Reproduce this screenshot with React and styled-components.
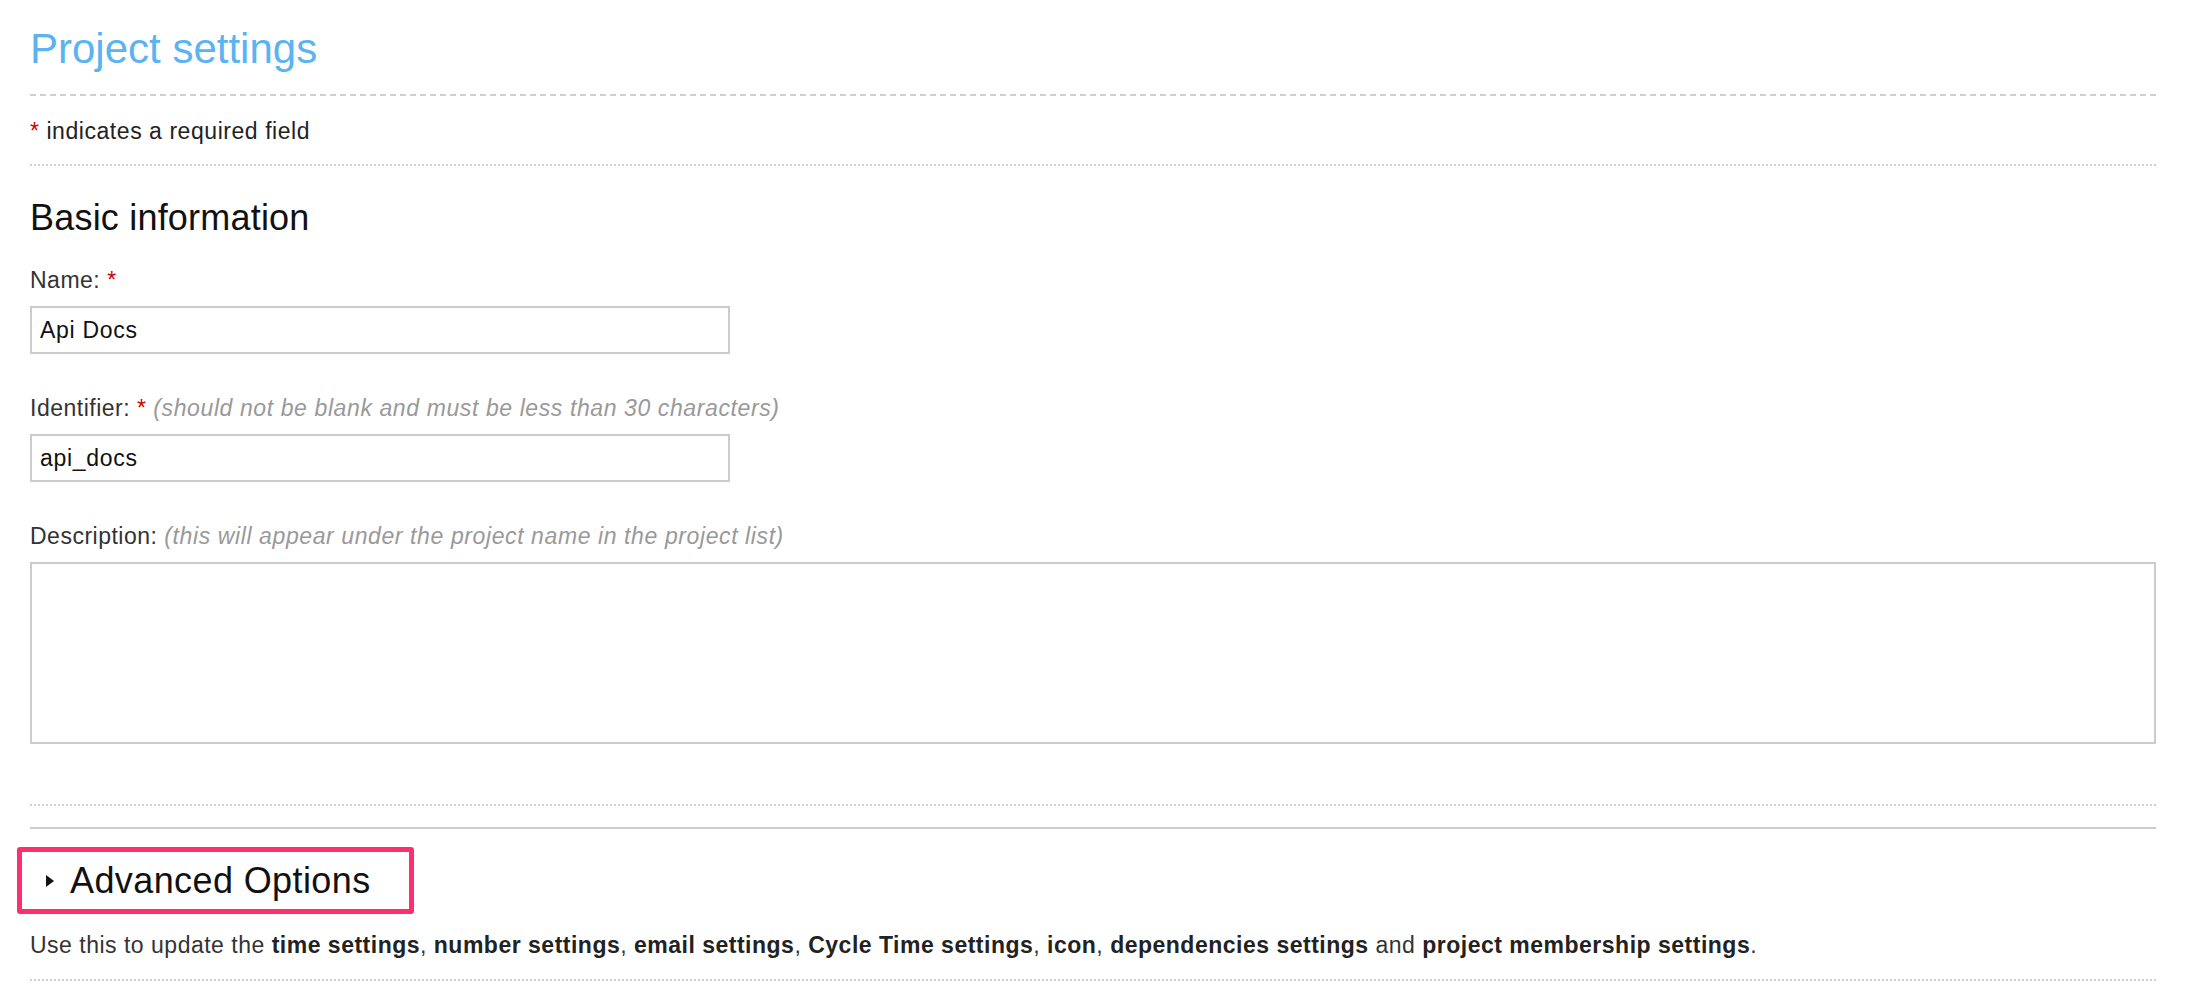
import React from "react";
import styled, { createGlobalStyle } from "styled-components";

const Global = createGlobalStyle`
  html, body { margin: 0; padding: 0; background: #fff; }
  body { font-family: "Liberation Sans", Arial, Helvetica, sans-serif; color: #333; }
  * { box-sizing: border-box; }
`;

const Page = styled.div`
  padding: 0 30px;
`;

const Title = styled.h2`
  margin: 0;
  padding: 24px 0 20px;
  font-size: 42px;
  line-height: 50px;
  font-weight: normal;
  color: #5bb3f1;
  border-bottom: 2px dashed #cfcfcf;
`;

const Note = styled.p`
  margin: 0;
  padding: 20px 0 17px;
  font-size: 23px;
  line-height: 31px;
  letter-spacing: 0.55px;
  color: #222;
  border-bottom: 2px dotted #cfcfcf;
`;

const Required = styled.span`
  color: #d00000;
`;

const SectionHeading = styled.h3`
  margin: 0;
  padding-top: 31px;
  font-size: 36px;
  line-height: 42px;
  letter-spacing: 0.2px;
  font-weight: normal;
  color: #111;
`;

const Field = styled.div`
  display: flex;
  flex-direction: column;
  margin-top: ${(p) => p.$top}px;
`;

const Label = styled.label`
  font-size: 23px;
  line-height: 31px;
  letter-spacing: 0.5px;
  color: #333;
  margin-bottom: 10px;
`;

const Hint = styled.em`
  color: #999;
  font-style: italic;
  letter-spacing: 0.6px;
`;

const TextInput = styled.input`
  width: 700px;
  height: 48px;
  border: 2px solid #cccccc;
  padding: 0 8px;
  font-family: inherit;
  font-size: 23px;
  letter-spacing: 0.7px;
  color: #111;
  outline: none;
  border-radius: 0;
`;

const TextArea = styled.textarea`
  width: 100%;
  height: 182px;
  border: 2px solid #cccccc;
  padding: 8px;
  font-family: inherit;
  font-size: 23px;
  resize: none;
  outline: none;
  display: block;
`;

const DottedRule = styled.div`
  border-bottom: 2px dotted #cfcfcf;
  margin-top: ${(p) => p.$top}px;
`;

const SolidRule = styled.div`
  border-bottom: 2px solid #cccccc;
  margin-top: 21px;
`;

const Highlight = styled.div`
  display: inline-flex;
  align-items: center;
  gap: 15px;
  margin: 18px 0 0 -13px;
  padding: 8px 38px 7px 23px;
  border: 5px solid #ff2e6d;
  border-radius: 3px;
`;

const Caret = styled.svg`
  width: 10px;
  height: 12px;
  display: block;
`;

const AdvancedTitle = styled.span`
  font-size: 36px;
  line-height: 42px;
  letter-spacing: 0.4px;
  color: #111;
`;

const Info = styled.p`
  margin: 0;
  padding: 16px 0 18px;
  font-size: 23px;
  line-height: 31px;
  letter-spacing: 0.5px;
  color: #333;
  b { font-weight: bold; color: #222; }
`;

export default function App() {
  return (
    <Page>
      <Global />
      <Title>Project settings</Title>
      <Note>
        <Required>*</Required> indicates a required field
      </Note>
      <SectionHeading>Basic information</SectionHeading>
      <Field $top={26}>
        <Label>
          Name: <Required>*</Required>
        </Label>
        <TextInput defaultValue="Api Docs" />
      </Field>
      <Field $top={39}>
        <Label>
          Identifier: <Required>*</Required>{" "}
          <Hint>(should not be blank and must be less than 30 characters)</Hint>
        </Label>
        <TextInput defaultValue="api_docs" />
      </Field>
      <Field $top={39}>
        <Label>
          Description: <Hint>(this will appear under the project name in the project list)</Hint>
        </Label>
        <TextArea />
      </Field>
      <DottedRule $top={60} />
      <SolidRule />
      <Highlight>
        <Caret viewBox="0 0 10 12">
          <path d="M1 0 L9 6 L1 12 Z" fill="#111" />
        </Caret>
        <AdvancedTitle>Advanced Options</AdvancedTitle>
      </Highlight>
      <Info>
        Use this to update the <b>time settings</b>, <b>number settings</b>,{" "}
        <b>email settings</b>, <b>Cycle Time settings</b>, <b>icon</b>,{" "}
        <b>dependencies settings</b> and <b>project membership settings</b>.
      </Info>
      <DottedRule $top={0} />
    </Page>
  );
}
